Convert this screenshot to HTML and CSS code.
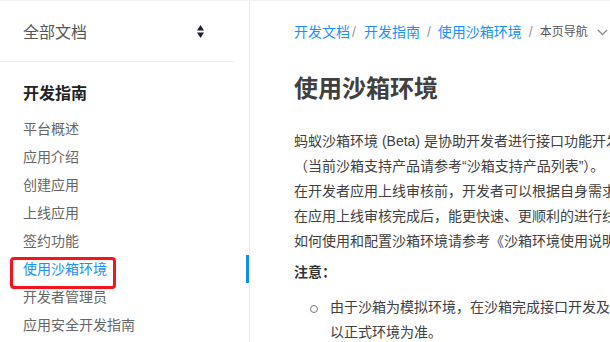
FILE: index.html
```html
<!DOCTYPE html>
<html lang="zh-CN">
<head>
    <meta charset="UTF-8">
    <meta name="viewport" content="width=device-width, initial-scale=1.0">
    <title>使用沙箱环境</title>
    <link rel="stylesheet" href="styles.css">
</head>
<body>
    <div class="page">
        <aside class="sidebar">
            <div class="sidebar-head">
                <span class="sidebar-title">全部文档</span>
                <svg class="sort-icon" width="7" height="13" viewBox="0 0 7 13">
                    <path d="M3.5 0 L7 5.5 H0 Z" fill="#1c1f2e"/>
                    <path d="M3.5 13 L7 7.5 H0 Z" fill="#1c1f2e"/>
                </svg>
            </div>
            <div class="nav">
                <div class="nav-group">开发指南</div>
                <ul class="nav-list">
                    <li class="nav-item">平台概述</li>
                    <li class="nav-item">应用介绍</li>
                    <li class="nav-item">创建应用</li>
                    <li class="nav-item">上线应用</li>
                    <li class="nav-item">签约功能</li>
                    <li class="nav-item active">使用沙箱环境</li>
                    <li class="nav-item">开发者管理员</li>
                    <li class="nav-item">应用安全开发指南</li>
                </ul>
            </div>
        </aside>

        <main class="content">
            <div class="breadcrumb">
                <a class="crumb" href="#">开发文档</a><span class="sep first">/</span>
                <a class="crumb" href="#">开发指南</a><span class="sep">/</span>
                <a class="crumb" href="#">使用沙箱环境</a><span class="sep">/</span>
                <span class="page-nav">本页导航
                    <svg class="chevron" width="11" height="7" viewBox="0 0 11 7">
                        <path d="M1 1 L5.5 5.5 L10 1" fill="none" stroke="#888" stroke-width="1.3"/>
                    </svg>
                </span>
            </div>

            <h1 class="title">使用沙箱环境</h1>

            <p class="text">
                蚂蚁沙箱环境 (Beta) 是协助开发者进行接口功能开发及主要功能联调的辅助环境。<br>
                （当前沙箱支持产品请参考“沙箱支持产品列表”）。<br>
                在开发者应用上线审核前，开发者可以根据自身需求，先在沙箱中调试。<br>
                在应用上线审核完成后，能更快速、更顺利的进行线上调试。<br>
                如何使用和配置沙箱环境请参考《沙箱环境使用说明》。
            </p>

            <p class="note">注意：</p>

            <ul class="bullets">
                <li>由于沙箱为模拟环境，在沙箱完成接口开发及联调后，<br>以正式环境为准。</li>
            </ul>
        </main>
    </div>
</body>
</html>
```

FILE: styles.css
```css
* {
    box-sizing: border-box;
}
html, body {
    margin: 0;
    padding: 0;
    height: 100%;
    overflow: hidden;
    background-color: #fff;
}
body {
    font-family: "Liberation Sans", "Noto Sans CJK SC", sans-serif;
    font-size: 14px;
    color: #404040;
    border-top: 1px solid #f0f0f0;
}
.page {
    display: flex;
    height: 100%;
}

/* sidebar */
.sidebar {
    flex: 0 0 250px;
    border-right: 1px solid #ebebeb;
}
.sidebar-head {
    display: flex;
    align-items: center;
    justify-content: space-between;
    height: 61px;
    margin-right: 15px;
    padding: 0 30px 0 23px;
    border-bottom: 1px solid #efefef;
}
.sidebar-title {
    font-size: 16px;
    color: #555;
}
.sort-icon {
    display: block;
}
.nav {
    padding-top: 18px;
}
.nav-group {
    padding-left: 23px;
    line-height: 28px;
    margin-bottom: 7px;
    font-size: 16px;
    font-weight: bold;
    color: #222;
}
.nav-list {
    list-style: none;
    margin: 0;
    padding: 0;
}
.nav-item {
    position: relative;
    padding-left: 23px;
    line-height: 28px;
    color: #666;
}
.nav-item.active {
    color: #1890ff;
}
.nav-item.active::before {
    content: "";
    position: absolute;
    right: 0;
    top: 0;
    width: 3px;
    height: 28px;
    background-color: #108ee9;
}
.nav-item.active::after {
    content: "";
    position: absolute;
    left: 10px;
    top: 2px;
    width: 100px;
    height: 26px;
    border: 3px solid #f5141e;
    border-radius: 4px;
}

/* content */
.content {
    flex: 1;
    min-width: 0;
    padding: 20px 0 0 44px;
    white-space: nowrap;
}
.breadcrumb {
    display: flex;
    align-items: center;
    line-height: 22px;
}
.crumb {
    color: #1890ff;
    text-decoration: none;
}
.sep {
    color: #999;
    margin: 0 7px;
}
.sep.first {
    margin: 0 8px 0 2px;
}
.page-nav {
    display: flex;
    align-items: center;
    font-size: 12px;
    color: #555;
}
.chevron {
    margin-left: 9px;
}
.title {
    margin: 29px 0 0;
    font-size: 24px;
    line-height: 34px;
    font-weight: bold;
    color: #404040;
}
.text {
    margin: 23px 0 0;
    line-height: 25px;
}
.note {
    margin: 6px 0 0;
    line-height: 25px;
    font-weight: bold;
    color: #333;
}
.bullets {
    margin: 10px 0 0;
    padding-left: 36px;
    list-style: none;
}
.bullets li {
    position: relative;
    line-height: 25px;
}
.bullets li::before {
    content: "";
    position: absolute;
    left: -20px;
    top: 10px;
    width: 6px;
    height: 6px;
    border: 1px solid #777;
    border-radius: 50%;
}
```
